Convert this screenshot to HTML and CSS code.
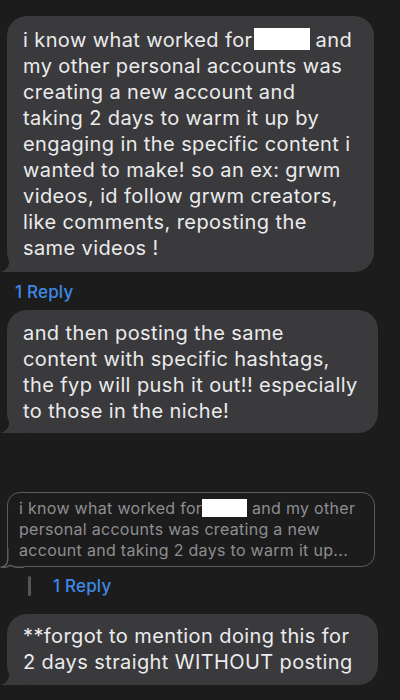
FILE: index.html
```html
<!DOCTYPE html>
<html>
<head>
<meta charset="utf-8">
<link rel="stylesheet" href="styles.css">
</head>
<body>
<div class="thread">
  <div class="bubble b1">
    <span>i know what worked for<span class="redact r1"></span> and</span>
    <span>my other personal accounts was</span>
    <span>creating a new account and</span>
    <span>taking 2 days to warm it up by</span>
    <span>engaging in the specific content i</span>
    <span>wanted to make! so an ex: grwm</span>
    <span>videos, id follow grwm creators,</span>
    <span>like comments, reposting the</span>
    <span>same videos !</span>
    <svg class="tail" width="24" height="20" viewBox="0 0 24 20"><path d="M0 20 C5 19 8 16 9 11 L9 0 L24 0 L24 20 Z" fill="#3a3a3c"/></svg>
  </div>
  <div class="reply r-first">1 Reply</div>
  <div class="bubble b2">
    <span>and then posting the same</span>
    <span>content with specific hashtags,</span>
    <span>the fyp will push it out!! especially</span>
    <span>to those in the niche!</span>
    <svg class="tail" width="24" height="20" viewBox="0 0 24 20"><path d="M0 20 C5 19 8 16 9 11 L9 0 L24 0 L24 20 Z" fill="#3a3a3c"/></svg>
  </div>
  <div class="quote">
    <svg class="qtail" width="24" height="20" viewBox="0 0 24 20"><rect x="0" y="0" width="24" height="20" fill="#1c1c1d"/><path d="M7.75 0 L7.75 11 C7.75 15.5 5 18.6 0.6 19.25 C4.5 19.7 8 18.8 10.2 17.4 C12.5 18.7 15.5 19.25 19 19.25 L24 19.25" fill="none" stroke="#5c5c5e" stroke-width="1.5"/></svg>
    <span class="qline">i know what worked for<span class="redact r2"></span> and my other</span>
    <span class="qline">personal accounts was creating a new</span>
    <span class="qline">account and taking 2 days to warm it up...</span>
  </div>
  <div class="reply-row">
    <span class="bar"></span>
    <span class="reply">1 Reply</span>
  </div>
  <div class="bubble b3">
    <span>**forgot to mention doing this for</span>
    <span>2 days straight WITHOUT posting</span>
    <svg class="tail" width="24" height="20" viewBox="0 0 24 20"><path d="M0 20 C5 19 8 16 9 11 L9 0 L24 0 L24 20 Z" fill="#3a3a3c"/></svg>
  </div>
</div>
</body>
</html>
```
FILE: styles.css
```css
html, body {
  margin: 0;
  padding: 0;
  background: #1c1c1d;
}
body {
  width: 400px;
  height: 700px;
  overflow: hidden;
  font-family: Inter, "Noto Sans", sans-serif;
}
.thread {
  display: flex;
  flex-direction: column;
  align-items: flex-start;
  padding-top: 16px;
  padding-left: 7px;
}
.bubble {
  position: relative;
  box-sizing: border-box;
  background: #3a3a3c;
  color: #ebebed;
  border-radius: 20px;
  font-size: 20px;
  letter-spacing: 0.4px;
  line-height: 26px;
  padding: 11px 6px 11px 16px;
  display: flex;
  flex-direction: column;
  white-space: nowrap;
}
.bubble .tail {
  position: absolute;
  left: -7px;
  bottom: 0;
}
.b1 { width: 367px; height: 256px; }
.b2 { width: 371px; height: 123px; padding-top: 10px; }
.b3 { width: 371px; height: 71px; padding-top: 9px; }
.redact {
  display: inline-block;
  background: #fff;
  vertical-align: top;
}
.r1 { width: 56px; height: 22px; margin-top: 1px; margin-left: 1px; }
.r2 { width: 45px; height: 18px; margin-top: 1px; }
.reply {
  color: #3c8ae6;
  font-size: 17px;
  line-height: 20px;
  font-weight: 500;
  letter-spacing: 0.2px;
}
.r-first {
  margin: 10px 0 8px 8px;
}
.quote {
  position: relative;
  box-sizing: border-box;
  margin-top: 59px;
  width: 368px;
  height: 75px;
  border: 1.5px solid #5c5c5e;
  border-radius: 13px;
  padding: 5px 4px 5px 11px;
  color: #8e8e90;
  font-size: 16px;
  letter-spacing: 0.3px;
  line-height: 21px;
  display: flex;
  flex-direction: column;
  white-space: nowrap;
}
.qline {
  position: relative;
}
.qtail {
  position: absolute;
  left: -8.5px;
  bottom: -1.5px;
}
.reply-row {
  display: flex;
  align-items: center;
  margin: 9px 0 18px 21px;
  gap: 22px;
  height: 20px;
}
.bar {
  width: 3px;
  height: 20px;
  border-radius: 2px;
  background: #555557;
}
```
